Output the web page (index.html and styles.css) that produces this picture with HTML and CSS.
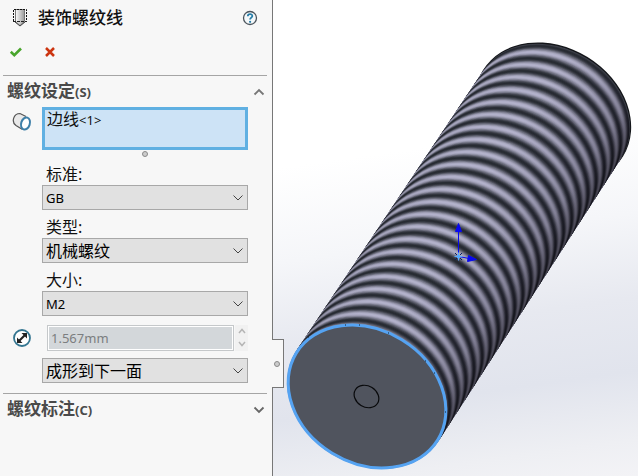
FILE: index.html
```html
<!DOCTYPE html>
<html lang="zh-CN">
<head>
<meta charset="utf-8">
<title>装饰螺纹线</title>
<link rel="stylesheet" href="styles.css">
</head>
<body>
<main class="app">
  <aside class="panel">
    <header class="title-bar">
      <svg class="title-icon" width="16" height="20" viewBox="0 0 16 20" aria-hidden="true">
        <defs><linearGradient id="metal"><stop offset="0" stop-color="#fff"/><stop offset="1" stop-color="#999"/></linearGradient></defs>
        <path d="M3.500 1.500h9v12l-4.500 4-4.500-4z" fill="url(#metal)" stroke="#777"/>
        <path d="M1.500 13V1.500h13V13" fill="none" stroke="#111" stroke-dasharray="2 1"/>
        <path d="M1 13.500h14" stroke="#222" stroke-dasharray="3 1"/>
        <path d="M3 14l5 4 5-4" fill="none" stroke="#444"/>
      </svg>
      <h1 class="title">装饰螺纹线</h1>
      <button class="icon-button" aria-label="帮助">
        <svg width="16" height="16" viewBox="0 0 16 16"><circle cx="8" cy="8" r="6.500" fill="#f4f8fa" stroke="#4b545c" stroke-width="1.300"/><path d="M5.800 6.300c0-3 4.700-2.800 4.500-.2-.1 1.500-2.200 1.600-2.200 3.400" fill="none" stroke="#267da8" stroke-width="1.800"/><circle cx="8.100" cy="11.800" r="1.100" fill="#267da8"/></svg>
      </button>
    </header>
    <div class="actions">
      <button class="icon-button" aria-label="确定">
        <svg width="14" height="12" viewBox="0 0 14 12"><path d="M1.800 5.800l3.500 3.400L12 2.500" fill="none" stroke="#48a52c" stroke-width="2.600"/></svg>
      </button>
      <button class="icon-button" aria-label="取消">
        <svg width="12" height="12" viewBox="0 0 12 12"><path d="M2 2l8 8M10 2l-8 8" stroke="#cc3510" stroke-width="2.500"/></svg>
      </button>
    </div>
    <section class="group">
      <h2><button class="group-toggle" aria-expanded="true">
        <span>螺纹设定<small>(S)</small></span>
        <svg width="12" height="8" viewBox="0 0 12 8"><path d="M1.500 6.500L6 2l4.500 4.500" fill="none" stroke="#777" stroke-width="1.800"/></svg>
      </button></h2>
      <div class="fields">
        <div class="row">
          <svg class="row-icon" width="20" height="20" viewBox="0 0 20 20" aria-hidden="true">
            <path d="M12 18L4 13.500C-1 10 1.500 1.500 8 1.500l8 4z" fill="#e9e9e9"/>
            <path d="M10.500 17.500L4 13.500C-1 10 1.500 1.500 8 1.500l6 3" fill="none" stroke="#555" stroke-width="1.200"/>
            <ellipse cx="13.500" cy="11.500" rx="4.300" ry="6.200" transform="rotate(18 13.500 11.500)" fill="#fff" stroke="#3d7fa8" stroke-width="2"/>
          </svg>
          <div class="selection" role="listbox" aria-label="圆形边线" tabindex="0"><div role="option" aria-selected="true">边线<small>&lt;1&gt;</small></div></div>
        </div>
        <div class="grip"></div>
        <label class="label" for="standard">标准:</label>
        <select class="select latin" id="standard"><option>GB</option></select>
        <label class="label" for="type">类型:</label>
        <select class="select" id="type"><option>机械螺纹</option></select>
        <label class="label" for="size">大小:</label>
        <select class="select latin" id="size"><option>M2</option></select>
        <div class="row spin-row">
          <svg class="row-icon" width="20" height="20" viewBox="0 0 20 20" aria-hidden="true">
            <circle cx="10" cy="10" r="8" fill="#fff" stroke="#337590" stroke-width="1.800"/>
            <path d="M6.500 13.500l7-7" stroke="#222" stroke-width="2.200"/>
            <path d="M15 5v5.500L9.500 5zM5 15V9.500l5.500 5.500z" fill="#222"/>
          </svg>
          <div class="spin">
            <input class="spin-input" aria-label="直径" value="1.567mm" disabled>
            <div class="spin-arrows">
              <button aria-label="增加" disabled><svg width="8" height="6" viewBox="0 0 8 6"><path d="M1 5l3-3.500L7 5" fill="none" stroke="#b5b5b5" stroke-width="1.500"/></svg></button>
              <button aria-label="减少" disabled><svg width="8" height="6" viewBox="0 0 8 6"><path d="M1 1l3 3.500L7 1" fill="none" stroke="#b5b5b5" stroke-width="1.500"/></svg></button>
            </div>
          </div>
        </div>
        <select class="select" aria-label="终止条件"><option>成形到下一面</option></select>
      </div>
    </section>
    <section class="group">
      <h2><button class="group-toggle" aria-expanded="false">
        <span>螺纹标注<small>(C)</small></span>
        <svg width="12" height="8" viewBox="0 0 12 8"><path d="M1.500 1.500L6 6l4.500-4.500" fill="none" stroke="#666" stroke-width="1.800"/></svg>
      </button></h2>
    </section>
    <button class="splitter" aria-label="折叠面板"><span></span></button>
  </aside>
  <div class="viewport">
    <svg class="model" viewBox="273 0 365 476" preserveAspectRatio="xMidYMid slice" role="img" aria-label="螺纹圆柱模型">
      <defs>
        <linearGradient id="shade" gradientUnits="userSpaceOnUse" x1="294" y1="352" x2="437" y2="444">
          <stop offset="0" stop-color="#08080c" stop-opacity=".3"/>
          <stop offset=".06" stop-color="#101018" stop-opacity=".08"/>
          <stop offset=".2" stop-color="#15151c" stop-opacity="0"/>
          <stop offset=".4" stop-color="#181428" stop-opacity="0"/>
          <stop offset=".65" stop-color="#181428" stop-opacity=".12"/>
          <stop offset=".85" stop-color="#120e1c" stop-opacity=".3"/>
          <stop offset="1" stop-color="#08060c" stop-opacity=".65"/>
        </linearGradient>
      </defs>
      <g id="thread"></g>
      <path d="M295.200 352.500L483.400 70.600A81.700 65.600 31.500 0 1 622.600 156L438.800 440.500A84.200 67.600 31.500 0 0 295.200 352.500z" fill="url(#shade)"/>
      <ellipse cx="367" cy="396.500" rx="83" ry="66.500" transform="rotate(31.500 367 396.500)" fill="#50545e" stroke="#55a3f2" stroke-width="3"/>
      <ellipse cx="366.500" cy="396.500" rx="13" ry="10.500" transform="rotate(31.500 366.500 396.500)" fill="none" stroke="#090a0c" stroke-width="1.200"/>
      <path d="M345 325h1M359 325h1M388 333h1M425 361h1M434 373h1M308 337h1M445 412h1" stroke="#123"/>
      <g stroke="#0808f0" fill="#0808f0">
        <path d="M458.500 256V230M459 256.500l10 2" fill="none"/>
        <path d="M458.500 223.500l3 8h-6zM476.500 259.500l-9 2 1-6z"/>
      </g>
      <path d="M455 253l7 7M462 253l-7 7M454.500 256.500h8M458.500 252.500v8" stroke="#55a9ff" fill="none"/>
      <path d="M455 253l2 2M462 253l-2 2M455 260l2-2M462 260l-2-2" stroke="#0a1c60" fill="none"/>
    </svg>
  </div>
</main>
<script src="thread.js"></script>
</body>
</html>
```
FILE: styles.css
```css
* { box-sizing: border-box; }
body {
  margin: 0;
  font: 16px/20px "Noto Sans", "Noto Sans CJK SC", sans-serif;
  color: #111;
}
button { border: 0; padding: 0; background: none; color: inherit; font: inherit; }
svg { display: block; flex: none; }
.app { display: flex; min-height: 100vh; }
.panel {
  position: relative;
  flex: none;
  width: 273px;
  padding-left: 3px;
  background: #f7f7f7;
  border-right: 1px solid #777;
}
.title-bar { display: flex; align-items: center; height: 36px; padding: 0 14px 0 9px; }
.title { flex: 1; margin: 0 0 0 10px; font-size: 17px; line-height: 20px; font-weight: 500; }
.actions { display: flex; align-items: center; gap: 21px; height: 39px; padding: 0 6px 8px; }
.group { margin-right: 5px; border-top: 1px solid #a5a5a5; }
.group h2 { margin: 0; font-size: 17px; line-height: 20px; font-weight: 700; color: #4a4a4a; }
.group-toggle { display: flex; width: 100%; height: 31px; align-items: center; justify-content: space-between; padding: 0 2px 0 4px; }
.group small { font-size: 13px; }
.fields { padding: 0 19px 10px 39px; }
.row { display: flex; align-items: center; }
.row-icon { margin: 0 10px 0 -30px; }
.selection { flex: 1; height: 43px; padding: 0 2px; border: 3px solid #60b0e2; background: #cde3f6; line-height: 18px; }
.row:first-child .row-icon { align-self: flex-start; margin-top: 5px; }
.grip { width: 6px; height: 6px; margin: 1px auto 7px; border: 1px solid #8a8a8a; border-radius: 50%; background: #ccc; }
.label { display: block; height: 21px; padding-left: 4px; }
.select {
  display: block;
  width: 100%;
  height: 25px;
  margin: 0 0 7px;
  padding: 0 24px 0 3px;
  border: 1px solid #a8a8a8;
  border-radius: 0;
  appearance: none;
  background: #e1e1e1 url("data:image/svg+xml,%3Csvg xmlns='http://www.w3.org/2000/svg' width='10' height='6'%3E%3Cpath d='M.5.5L5 5 9.500.5' fill='none' stroke='%23444'/%3E%3C/svg%3E") no-repeat right 4px center;
  color: #000;
  font: inherit;
}
.latin { font-size: 13px; }
.spin-row { height: 27px; margin: 8px 0 7px; }
.spin { display: flex; flex: 1; min-width: 0; gap: 1px; padding-left: 5px; }
.spin-input {
  flex: 1;
  min-width: 0;
  height: 26px;
  padding: 0 3px;
  border: 1px solid #c5c8ca;
  box-shadow: inset 0 0 0 1px #fff;
  background: #d3d7da;
  color: #7b7e80;
  font: inherit;
  font-size: 13px;
}
.spin-arrows { display: flex; flex-direction: column; justify-content: space-around; align-items: center; width: 13px; background: #f1f1f1; }
.fields > .select:last-child { margin-bottom: 0; }
.splitter {
  position: absolute;
  z-index: 1;
  left: 268px;
  top: 339px;
  display: flex;
  align-items: center;
  justify-content: center;
  width: 16px;
  height: 49px;
  padding-left: 3px;
  border: 1px solid #777;
  border-left: 0;
  background: #f7f7f7;
  clip-path: inset(0 0 0 4px);
}
.splitter span { width: 6px; height: 6px; border: 1px solid #8a8a8a; border-radius: 50%; background: #ccc; }
.viewport {
  position: relative;
  flex: 1;
  min-width: 0;
  background: linear-gradient(172deg, #fff 0%, #fff 32%, #f5f6f9 50%, #e7e9f0 66%, #e1e4ed 80%, #eeeff3 93%, #f3f3f6 100%);
}
.model { position: absolute; inset: 0; width: 100%; height: 100%; }
```
FILE: thread.js
```js
// Draws the thread as a stack of discs from the far end to the near face.
const group = document.getElementById("thread");
const far = [553, 113.3];
const near = [367, 396.5];
const farScale = 0.97;
const turns = 22.55;
const steps = 360;
const dark = [39, 43, 50];
const light = [180, 179, 204];

function addDisc(x, y, scale, fill) {
  const disc = document.createElementNS("http://www.w3.org/2000/svg", "ellipse");
  disc.setAttribute("rx", 84.2 * scale);
  disc.setAttribute("ry", 67.6 * scale);
  disc.setAttribute("transform", `translate(${x} ${y}) rotate(31.5)`);
  disc.setAttribute("fill", fill);
  group.appendChild(disc);
}

addDisc(far[0], far[1], farScale + 0.007, "#14161a");
for (let i = 1; i <= steps; i++) {
  const t = i / steps;
  const x = far[0] + (near[0] - far[0]) * t;
  const y = far[1] + (near[1] - far[1]) * t;
  const level = 0.5 + 0.5 * Math.cos(2 * Math.PI * (t * turns - 0.7));
  const rgb = dark.map((c, k) => Math.round(c + (light[k] - c) * level));
  addDisc(x, y, farScale + (1 - farScale) * t, `rgb(${rgb})`);
}
```
